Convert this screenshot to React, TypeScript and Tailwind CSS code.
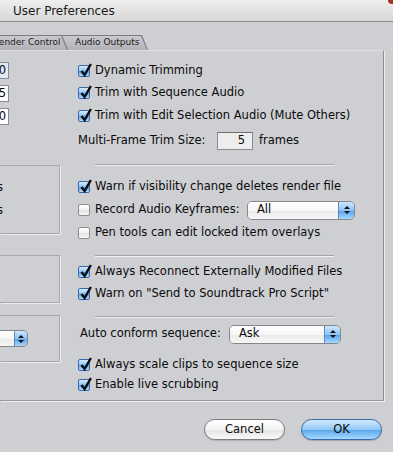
import type { ReactNode } from 'react';

function CheckBox({ checked }: { checked: boolean }) {
  return (
    <span
      className={
        checked
          ? 'relative block h-[12px] w-[12px] shrink-0 rounded-[2px] border border-[#3a68aa] bg-[linear-gradient(#d8ecfd,#8cc2f3_50%,#5ea6ea_55%,#b2ddff)]'
          : 'relative block h-[12px] w-[12px] shrink-0 rounded-[2px] border border-[#8e8e92] bg-[linear-gradient(#ffffff,#f2f2f2_50%,#e4e4e4_55%,#f8f8f8)]'
      }
    >
      {checked && (
        <svg className="absolute left-[1px] top-[-3px] h-[14px] w-[12px]" viewBox="0 0 12 14" aria-hidden="true">
          <path d="M1.5 8 L4.6 12 L10.9 1" stroke="#0c0c0c" strokeWidth="2.4" fill="none" strokeLinejoin="miter" />
        </svg>
      )}
    </span>
  );
}

function CheckRow({ checked, children, className = '' }: { checked: boolean; children: ReactNode; className?: string }) {
  return (
    <div className={`flex h-[20px] items-center gap-[5px] whitespace-nowrap ${className}`}>
      <CheckBox checked={checked} />
      <span>{children}</span>
    </div>
  );
}

function Sep({ className = '' }: { className?: string }) {
  return <div className={`ml-[17px] h-[2px] w-[239px] border-y border-t-[#a5a5a9] border-b-[#f3f3f5] ${className}`} />;
}

function Arrows() {
  return (
    <>
      <span className="block h-0 w-0 border-x-[3px] border-b-[3px] border-x-transparent border-b-[#111]" />
      <span className="block h-0 w-0 border-x-[3px] border-t-[3px] border-x-transparent border-t-[#111]" />
    </>
  );
}

function Popup({ label, className = '' }: { label: string; className?: string }) {
  return (
    <div className={`flex h-[19px] overflow-hidden rounded-[5px] border border-[#86868a] ${className}`}>
      <div className="flex flex-1 items-center bg-[linear-gradient(#ffffff,#f6f6f6_50%,#ebebeb_55%,#f7f7f7)] pl-[9px]">{label}</div>
      <div className="flex w-[16px] flex-col items-center justify-center gap-[2px] border-l border-[#5f86c0] bg-[linear-gradient(#cfe7fd,#8cc3f4_50%,#5aa5ec_55%,#a9d9ff)]">
        <Arrows />
      </div>
    </div>
  );
}

export default function App() {
  return (
    <div className="relative h-[452px] w-[393px] overflow-hidden bg-[#cecfd3] font-['DejaVu_Sans',sans-serif] text-[11.5px] text-[#0a0a0a]">
      {/* title bar */}
      <div className="flex h-[22px] items-center border-b border-[#8a8a8a] bg-[linear-gradient(#eeeeee,#d7d7d7)] pl-[13px] text-[12px] text-[#1a1a1a]">
        User Preferences
      </div>
      <div className="absolute right-0 top-0 h-[4px] w-[5px] rounded-bl-full bg-[#a5321f]" />

      {/* tabs */}
      <div className="mt-[13px] flex h-[15px] text-[9px] text-[#1a1a1a]">
        <div className="relative z-10 -ml-[12px] flex w-[80px] bg-[#7c7c80] [clip-path:polygon(0_0,calc(100%-6px)_0,100%_100%,0_100%)]">
          <div className="mr-[1px] mt-[1px] flex flex-1 items-center bg-[linear-gradient(#cbcbcf,#b2b2b6)] pl-[5px] [clip-path:polygon(0_0,calc(100%-6px)_0,100%_100%,0_100%)]">
            Render Control
          </div>
        </div>
        <div className="-ml-[6px] flex w-[86px] bg-[#7c7c80] [clip-path:polygon(0_0,calc(100%-6px)_0,100%_100%,6px_100%)]">
          <div className="mr-[1px] mt-[1px] flex flex-1 items-center bg-[linear-gradient(#cbcbcf,#b2b2b6)] pl-[13px] [clip-path:polygon(0_0,calc(100%-6px)_0,100%_100%,6px_100%)]">
            Audio Outputs
          </div>
        </div>
      </div>

      {/* panel */}
      <div className="flex h-[351px] w-[384px] border-y border-r border-t-[#e0e0e2] border-r-[#8e8e92] border-b-[#98989c] shadow-[1px_1px_0_#eeeef0]">
        {/* left column (cut off at the window edge) */}
        <div className="flex w-[60px] flex-col items-start">
          <div className="mt-[11px] flex h-[17px] w-[9px] items-center justify-end border-y border-r border-[#8c8c90] bg-[#dde8f8] pr-[2px]">0</div>
          <div className="mt-[6px] flex h-[17px] w-[9px] items-center justify-end border-y border-r border-[#8c8c90] bg-white pr-[2px]">5</div>
          <div className="mt-[6px] flex h-[17px] w-[9px] items-center justify-end border-y border-r border-[#8c8c90] bg-white pr-[2px]">0</div>

          <div className="mt-[40px] h-[69px] w-[60px] border-y border-r border-[#a9a9ad] shadow-[1px_1px_0_#ececee] pt-[12px]">
            <div className="-ml-[3px] flex h-[20px] items-center">s</div>
            <div className="-ml-[3px] mt-[3px] flex h-[20px] items-center">s</div>
          </div>

          <div className="mt-[21px] h-[48px] w-[60px] border-y border-r border-[#a9a9ad] shadow-[1px_1px_0_#ececee]" />

          <div className="mt-[12px] h-[47px] w-[60px] border-y border-r border-[#a9a9ad] shadow-[1px_1px_0_#ececee] pt-[14px]">
            <div className="flex h-[17px] w-[28px] overflow-hidden rounded-r-[5px] border-y border-r border-[#86868a]">
              <div className="flex-1 bg-[linear-gradient(#ffffff,#f6f6f6_50%,#ebebeb_55%,#f7f7f7)]" />
              <div className="flex w-[13px] flex-col items-center justify-center gap-[2px] border-l border-[#5f86c0] bg-[linear-gradient(#cfe7fd,#8cc3f4_50%,#5aa5ec_55%,#a9d9ff)]">
                <Arrows />
              </div>
            </div>
          </div>
        </div>

        {/* right column */}
        <div className="flex flex-col pl-[18px] pt-[10px]">
          <CheckRow checked>Dynamic Trimming</CheckRow>
          <CheckRow checked className="mt-[2px]">Trim with Sequence Audio</CheckRow>
          <CheckRow checked className="mt-[3px]">Trim with Edit Selection Audio (Mute Others)</CheckRow>
          <div className="mt-[5px] flex h-[20px] items-center whitespace-nowrap">
            <span className="w-[139px]">Multi-Frame Trim Size:</span>
            <div className="flex h-[18px] w-[36px] items-center justify-end border border-[#8c8c90] border-t-[#6e6e72] bg-[#ededed] pr-[7px]">5</div>
            <span className="ml-[6px]">frames</span>
          </div>

          <Sep className="mt-[13px]" />

          <CheckRow checked className="mt-[11px]">Warn if visibility change deletes render file</CheckRow>
          <div className="mt-[3px] flex h-[20px] items-center gap-[5px] whitespace-nowrap">
            <CheckBox checked={false} />
            <span className="w-[152px]">Record Audio Keyframes:</span>
            <Popup label="All" className="-ml-[5px] w-[108px]" />
          </div>
          <CheckRow checked={false} className="mt-[3px]">Pen tools can edit locked item overlays</CheckRow>

          <Sep className="mt-[12px]" />

          <CheckRow checked className="mt-[5px]">Always Reconnect Externally Modified Files</CheckRow>
          <CheckRow checked className="mt-[2px]">Warn on &quot;Send to Soundtrack Pro Script&quot;</CheckRow>

          <Sep className="mt-[12px]" />

          <div className="mt-[6px] flex h-[20px] items-center whitespace-nowrap pl-[2px]">
            <span className="w-[149px]">Auto conform sequence:</span>
            <Popup label="Ask" className="w-[112px]" />
          </div>
          <CheckRow checked className="mt-[11px] h-[19px]">Always scale clips to sequence size</CheckRow>
          <CheckRow checked>Enable live scrubbing</CheckRow>
        </div>
      </div>

      {/* buttons */}
      <div className="mt-[18px] flex justify-end gap-[16px] pr-[11px]">
        <button
          type="button"
          className="h-[21px] w-[81px] rounded-full border border-[#7a7a7e] bg-[linear-gradient(#ffffff,#f3f3f3_50%,#e3e3e3_52%,#f9f9f9)] shadow-[0_1px_1px_rgba(0,0,0,0.15)]"
        >
          Cancel
        </button>
        <button
          type="button"
          className="h-[21px] w-[81px] rounded-full border border-[#3a68a8] bg-[linear-gradient(#d2ebfe,#92c8f6_50%,#5ba6ec_52%,#a5dbff)] shadow-[0_1px_1px_rgba(0,0,0,0.2)]"
        >
          OK
        </button>
      </div>
    </div>
  );
}
